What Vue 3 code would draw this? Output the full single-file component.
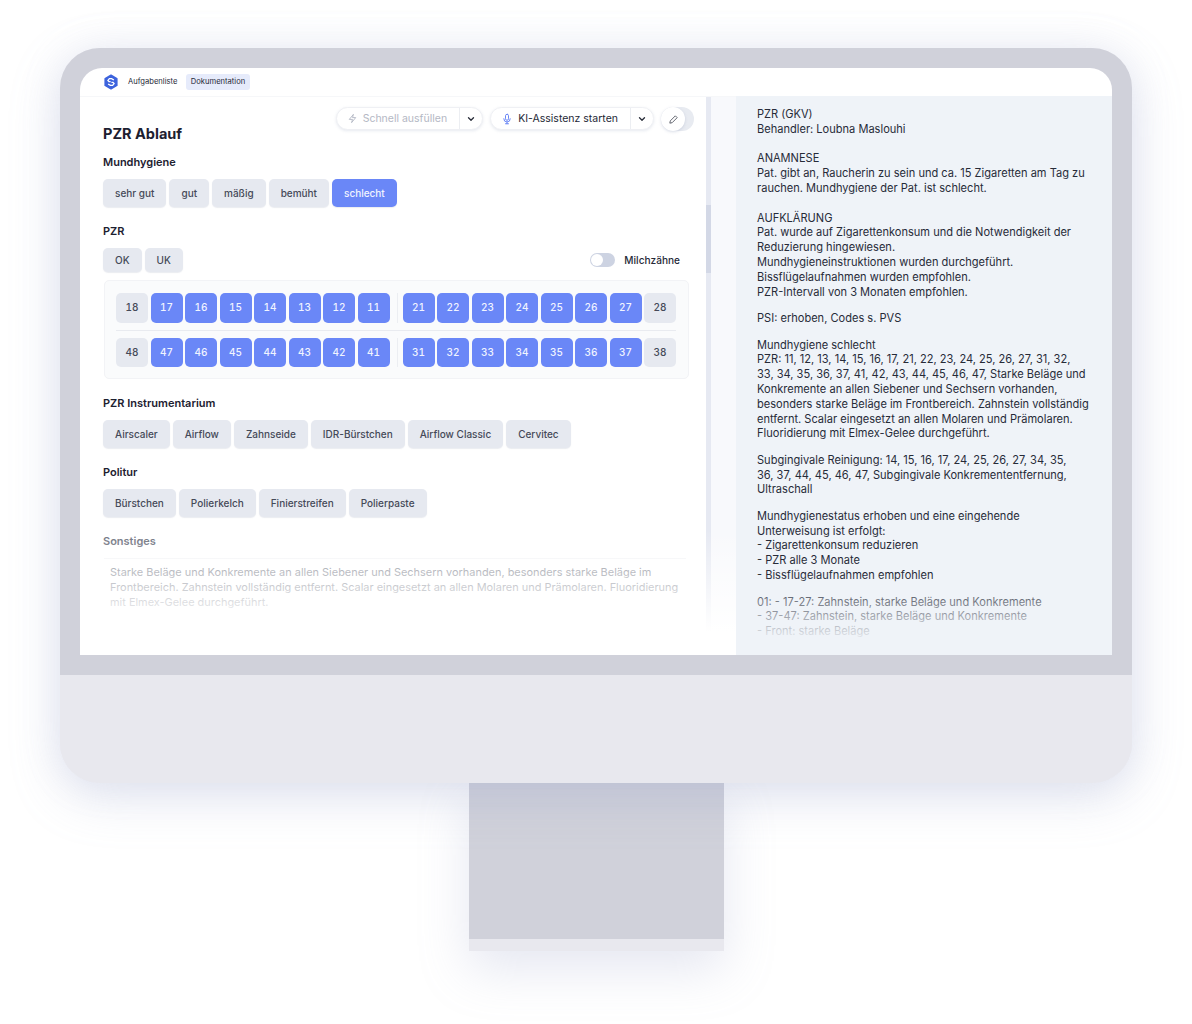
<script setup>
const mund = ['sehr gut', 'gut', 'mäßig', 'bemüht']
const instr = ['Airscaler', 'Airflow', 'Zahnseide', 'IDR-Bürstchen', 'Airflow Classic', 'Cervitec']
const pol = ['Bürstchen', 'Polierkelch', 'Finierstreifen', 'Polierpaste']
const rows = [
  [[18, 17, 16, 15, 14, 13, 12, 11], [21, 22, 23, 24, 25, 26, 27, 28]],
  [[48, 47, 46, 45, 44, 43, 42, 41], [31, 32, 33, 34, 35, 36, 37, 38]]
]
const off = [18, 28, 48, 38]
</script>

<template>
  <div class="page">
    <div class="monitor">
      <div class="bezel">
        <div class="screen">
          <header class="topbar">
            <svg class="logo" viewBox="0 0 16 16" width="16" height="16">
              <path d="M8 1.2 13.8 4.6v6.8L8 14.8 2.2 11.4V4.6Z" fill="#3d63dd" stroke="#3d63dd" stroke-width="1.6" stroke-linejoin="round" />
              <path d="M10.9 6 8.6 4.6H6.4L4.9 6.4 6 7.7h1.6M5.1 10l2.3 1.4h2.2l1.5-1.8L10 8.3H8.4" fill="none" stroke="#fff" stroke-width="1.3" />
            </svg>
            <span class="nav">Aufgabenliste</span>
            <span class="nav active">Dokumentation</span>
          </header>
          <div class="panes">
            <section class="left">
              <div class="left-inner">
                <div class="head">
                  <h1>PZR Ablauf</h1>
                  <div class="tools">
                    <div class="pill faded">
                      <span class="pill-main">
                        <svg viewBox="0 0 24 24" width="11" height="11" fill="none" stroke="#b4b8c4" stroke-width="2" stroke-linejoin="round"><path d="M14 3 5 14h7l-2 7 9-11h-7z" /></svg>
                        Schnell ausfüllen
                      </span>
                      <span class="pill-caret"><svg viewBox="0 0 12 12" width="10" height="10" fill="none" stroke="#2a2e3a" stroke-width="1.6" stroke-linecap="round" stroke-linejoin="round"><path d="m3 4.5 3 3 3-3" /></svg></span>
                    </div>
                    <div class="pill">
                      <span class="pill-main strong">
                        <svg viewBox="0 0 24 24" width="12" height="12" fill="none" stroke="#6b87f5" stroke-width="2" stroke-linecap="round"><rect x="9" y="2.5" width="6" height="12" rx="3" /><path d="M5.5 11.5a6.5 6.5 0 0 0 13 0M12 18v3.5M9 21.5h6" /></svg>
                        KI-Assistenz starten
                      </span>
                      <span class="pill-caret"><svg viewBox="0 0 12 12" width="10" height="10" fill="none" stroke="#2a2e3a" stroke-width="1.6" stroke-linecap="round" stroke-linejoin="round"><path d="m3 4.5 3 3 3-3" /></svg></span>
                    </div>
                    <div class="edit">
                      <span class="knob"><svg viewBox="0 0 24 24" width="11" height="11" fill="none" stroke="#3a3e4a" stroke-width="1.7" stroke-linejoin="round"><path d="M4 20l1-5L16 4l4 4L9 19z" /></svg></span>
                    </div>
                  </div>
                </div>

                <h2 class="first">Mundhygiene</h2>
                <div class="chips">
                  <button v-for="m in mund" :key="m" class="chip">{{ m }}</button>
                  <button class="chip on">schlecht</button>
                </div>

                <h2>PZR</h2>
                <div class="pzr-row">
                  <div class="chips small">
                    <button class="chip">OK</button>
                    <button class="chip">UK</button>
                  </div>
                  <div class="milk">
                    <span class="toggle"><i></i></span>
                    <span>Milchzähne</span>
                  </div>
                </div>

                <div class="teeth">
                  <div v-for="(row, i) in rows" :key="i" class="t-row" :class="{ second: i === 1 }">
                    <div v-for="(group, g) in row" :key="g" class="t-group">
                      <button v-for="n in group" :key="n" class="tooth" :class="{ on: !off.includes(n) }">{{ n }}</button>
                    </div>
                  </div>
                </div>

                <h2>PZR Instrumentarium</h2>
                <div class="chips">
                  <button v-for="m in instr" :key="m" class="chip">{{ m }}</button>
                </div>

                <h2>Politur</h2>
                <div class="chips">
                  <button v-for="m in pol" :key="m" class="chip">{{ m }}</button>
                </div>

                <h2 class="muted">Sonstiges</h2>
                <div class="notes">Starke Beläge und Konkremente an allen Siebener und Sechsern vorhanden, besonders starke Beläge im Frontbereich. Zahnstein vollständig entfernt. Scalar eingesetzt an allen Molaren und Prämolaren. Fluoridierung mit Elmex-Gelee durchgeführt.</div>
              </div>
              <div class="scrollbar"><i></i></div>
              <div class="fade"></div>
            </section>
            <aside class="right">
              <p>PZR (GKV)<br>Behandler: Loubna Maslouhi</p>
              <p class="g15">ANAMNESE<br>Pat. gibt an, Raucherin zu sein und ca. 15 Zigaretten am Tag zu rauchen. Mundhygiene der Pat. ist schlecht.</p>
              <p class="g15">AUFKLÄRUNG<br>Pat. wurde auf Zigarettenkonsum und die Notwendigkeit der Reduzierung hingewiesen.<br>Mundhygieneinstruktionen wurden durchgeführt.<br>Bissflügelaufnahmen wurden empfohlen.<br>PZR-Intervall von 3 Monaten empfohlen.</p>
              <p class="g12">PSI: erhoben, Codes s. PVS</p>
              <p class="g12">Mundhygiene schlecht<br>PZR: 11, 12, 13, 14, 15, 16, 17, 21, 22, 23, 24, 25, 26, 27, 31, 32,<br>33, 34, 35, 36, 37, 41, 42, 43, 44, 45, 46, 47, Starke Beläge und<br>Konkremente an allen Siebener und Sechsern vorhanden,<br>besonders starke Beläge im Frontbereich. Zahnstein vollständig<br>entfernt. Scalar eingesetzt an allen Molaren und Prämolaren.<br>Fluoridierung mit Elmex-Gelee durchgeführt.</p>
              <p class="g12">Subgingivale Reinigung: 14, 15, 16, 17, 24, 25, 26, 27, 34, 35,<br>36, 37, 44, 45, 46, 47, Subgingivale Konkremententfernung,<br>Ultraschall</p>
              <p class="g12">Mundhygienestatus erhoben und eine eingehende Unterweisung ist erfolgt:<br>- Zigarettenkonsum reduzieren<br>- PZR alle 3 Monate<br>- Bissflügelaufnahmen empfohlen</p>
              <p class="g12">01: - 17-27: Zahnstein, starke Beläge und Konkremente<br>- 37-47: Zahnstein, starke Beläge und Konkremente<br>- Front: starke Beläge</p>
              <div class="fade-right"></div>
            </aside>
          </div>
        </div>
      </div>
      <div class="chin"></div>
    </div>
    <div class="stand"><div class="stand-foot"></div></div>
  </div>
</template>

<style scoped>
.page {
  width: 1192px;
  height: 1024px;
  padding: 48px 60px 0;
  box-sizing: border-box;
  background: #fff;
  overflow: hidden;
  font-family: Inter, "Liberation Sans", sans-serif;
  color: #1c2030;
}
.monitor {
  position: relative;
  z-index: 1;
  width: 1072px;
  height: 735px;
  border-radius: 40px;
  background: #e8e8ee;
  box-shadow: 0 14px 50px rgba(150, 160, 200, 0.28), 0 0 40px rgba(170, 175, 210, 0.14);
}
.bezel {
  height: 627px;
  padding: 20px 20px;
  box-sizing: border-box;
  background: #d0d1da;
  border-radius: 40px 40px 0 0;
}
.chin {
  height: 108px;
  background: #e8e8ee;
  border-radius: 0 0 40px 40px;
}
.screen {
  height: 587px;
  background: #fff;
  border-radius: 22px 22px 0 0;
  overflow: hidden;
  display: flex;
  flex-direction: column;
}
.topbar {
  height: 28px;
  flex: none;
  display: flex;
  align-items: center;
  padding-left: 23px;
  box-sizing: border-box;
  font-size: 7.6px;
  color: #262a38;
}
.logo { margin-right: 9px; }
.nav { line-height: 16px; }
.active { margin-left: 9px; padding: 0 4.5px; background: #e6ebfb; border-radius: 3px; }
.panes { flex: 1; display: flex; min-height: 0; }
.left {
  position: relative;
  width: 656px;
  flex: none;
  overflow: hidden;
  border-top: 1px solid #f6f7f9;
  box-sizing: border-box;
  background: linear-gradient(to right, #fff 631px, #f8f9fc 631px);
}
.left-inner { padding: 10px 0 0 23px; width: 591px; }
.head {
  display: flex;
  justify-content: space-between;
  height: 48px;
}
h1 {
  margin: 18px 0 0;
  font-size: 14.5px;
  line-height: 17px;
  font-weight: 700;
  color: #1c2030;
}
.tools { display: flex; gap: 7px; height: 24px; }
.pill {
  display: flex;
  align-items: center;
  height: 23px;
  border: 1px solid #eff0f4;
  border-radius: 12px;
  box-sizing: border-box;
  background: #fff;
  box-shadow: 0 1px 3px rgba(160, 170, 195, 0.25);
  font-size: 10.5px;
}
.pill-main {
  display: flex;
  align-items: center;
  gap: 5px;
  padding: 0 12px 0 10px;
  height: 100%;
  border-right: 1px solid #eceef2;
  color: #b4b8c4;
}
.pill-main.strong { color: #242836; }
.pill-caret { width: 22px; display: flex; justify-content: center; }
.edit {
  width: 33px;
  height: 24px;
  border-radius: 12px;
  background: #e8ebf1;
}
.knob {
  width: 24px;
  height: 24px;
  border-radius: 50%;
  background: #fff;
  display: flex;
  align-items: center;
  justify-content: center;
  box-shadow: 0 1px 3px rgba(150, 160, 190, 0.35);
}
h2 {
  margin: 17px 0 10px;
  font-size: 11px;
  line-height: 14px;
  font-weight: 600;
  color: #1c2030;
}
h2.first { margin-top: 0; }
h2.muted { color: #70737f; }
.chips { display: flex; gap: 3px; }
.chip {
  height: 28px;
  padding: 0 12px;
  border: 0;
  border-radius: 5px;
  background: #e6e9f0;
  color: #454958;
  font: 500 10px Inter, "Liberation Sans", sans-serif;
  box-shadow: 0 1px 1px rgba(170, 178, 195, 0.25);
  white-space: nowrap;
}
.chip.on { background: #6a87f7; color: #f1f4ff; }
.small .chip { height: 24px; }
.pzr-row {
  display: flex;
  justify-content: space-between;
  align-items: center;
  height: 24px;
  margin-bottom: 8px;
  padding-right: 14px;
}
.milk {
  display: flex;
  align-items: center;
  gap: 9px;
  font-size: 10.1px;
  font-weight: 500;
  color: #262a38;
}
.toggle {
  width: 25px;
  height: 14px;
  border-radius: 7px;
  background: #cdd3e2;
  display: block;
  position: relative;
}
.toggle i {
  position: absolute;
  left: 1px;
  top: 1px;
  width: 12px;
  height: 12px;
  border-radius: 50%;
  background: #fff;
}
.teeth {
  width: 585px;
  margin-left: 1px;
  padding: 12px 12px 11px 11px;
  box-sizing: border-box;
  background: #fafbfc;
  border: 1px solid #f2f3f6;
  border-radius: 5px;
}
.t-row { display: flex; justify-content: space-between; padding-bottom: 7px; border-bottom: 1px solid #e9ebf0; }
.t-row.second { border-bottom: 0; padding: 7px 0 0; }
.t-group { display: flex; gap: 2.5px; }
.t-group:first-child { padding-right: 7px; border-right: 1px solid #eceef2; }
.tooth {
  width: 32px;
  height: 29.5px;
  border: 0;
  padding: 0 0 1px;
  border-radius: 5px;
  background: #e6e9f0;
  color: #454958;
  font: 500 10px Inter, "Liberation Sans", sans-serif;
  font-variant-numeric: tabular-nums;
}
.tooth.on { background: #6a87f7; color: #f1f4ff; }
.notes {
  margin: 0 0 0 1px;
  width: 582px;
  padding: 6px 6px;
  box-sizing: border-box;
  border-top: 1px solid #f4f5f7;
  font-size: 10.95px;
  line-height: 15px;
  color: #8b8e98;
}
.scrollbar {
  position: absolute;
  left: 626px;
  top: 0;
  width: 5px;
  height: 100%;
  background: #e6e9f2;
}
.scrollbar i {
  position: absolute;
  left: 0;
  top: 108px;
  width: 5px;
  height: 68px;
  background: #d3d8e6;
}
.fade {
  position: absolute;
  left: 0;
  right: 0;
  bottom: 0;
  height: 125px;
  background: linear-gradient(to bottom, rgba(255, 255, 255, 0), #fff 82%);
  pointer-events: none;
}
.right {
  position: relative;
  flex: 1;
  background: #eff3f8;
  padding: 11px 20px 0 21px;
  overflow: hidden;
  font-size: 11.07px;
  line-height: 14.8px;
  color: #272b38;
}
.right p { margin: 0; }
.g15 { margin-top: 14.8px !important; }
.g12 { margin-top: 11.7px !important; }
.fade-right {
  position: absolute;
  left: 0;
  right: 0;
  bottom: 0;
  height: 80px;
  background: linear-gradient(to bottom, rgba(239, 243, 248, 0), #eff3f8 85%);
}
.stand {
  position: relative;
  width: 255px;
  height: 168px;
  margin-left: 409px;
  background: #d0d1da;
  border-radius: 0 0 2px 2px;
  box-shadow: 0 18px 50px rgba(150, 160, 200, 0.25);
}
.stand-foot {
  position: absolute;
  left: 0;
  right: 0;
  bottom: 0;
  height: 12px;
  background: #e8e8ee;
}
</style>
